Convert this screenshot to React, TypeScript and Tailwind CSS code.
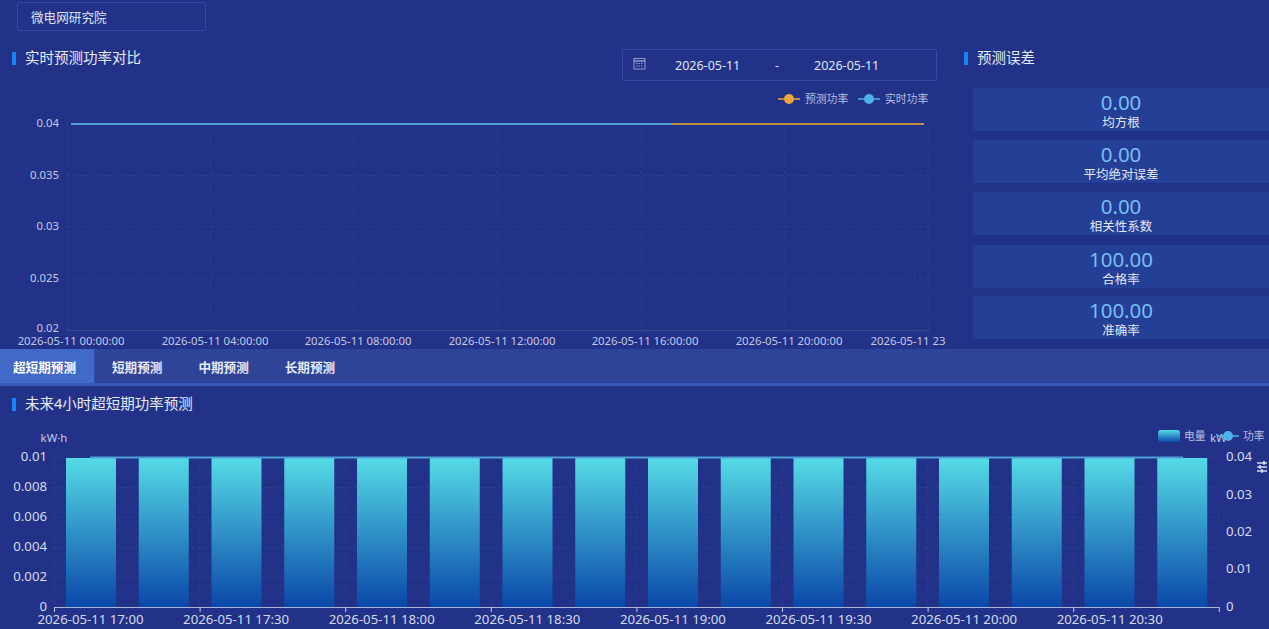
const FONT = '"Noto Sans", "Noto Sans CJK SC", sans-serif';

const stats = [
  { value: '0.00', label: '均方根' },
  { value: '0.00', label: '平均绝对误差' },
  { value: '0.00', label: '相关性系数' },
  { value: '100.00', label: '合格率' },
  { value: '100.00', label: '准确率' },
];

const tabs = ['短期预测', '中期预测', '长期预测'];

const SectionTitle = ({ text }: { text: string }) => (
  <div className="flex items-center gap-[9px] h-[20px]">
    <span className="w-[4px] h-[13px] bg-[#1486f5]" />
    <span className="text-[14.5px] leading-[20px] -mt-[2px] text-[#e6ebf8]">{text}</span>
  </div>
);

// 上方折线图，svg 从页面 y=85 开始
const PowerChart = () => {
  const xs = [67.5, 210.5, 354, 497.5, 641.5, 785, 920, 929];
  const ys = [90.5, 142, 193.5];
  const yLabels = [
    { t: '0.04', y: 38 },
    { t: '0.035', y: 90 },
    { t: '0.03', y: 141 },
    { t: '0.025', y: 193 },
    { t: '0.02', y: 243 },
  ];
  const xLabels = [
    { t: '2026-05-11 00:00:00', x: 71 },
    { t: '2026-05-11 04:00:00', x: 215 },
    { t: '2026-05-11 08:00:00', x: 358 },
    { t: '2026-05-11 12:00:00', x: 502 },
    { t: '2026-05-11 16:00:00', x: 645 },
    { t: '2026-05-11 20:00:00', x: 789 },
    { t: '2026-05-11 23', x: 908 },
  ];
  return (
    <svg width="950" height="264" className="block">
      {xs.map((x) => (
        <line key={x} x1={x} x2={x} y1="38" y2="245" stroke="#2e3e91" strokeDasharray="3 3" />
      ))}
      {ys.map((y) => (
        <line key={y} x1="67" x2="929" y1={y} y2={y} stroke="#2e3e91" strokeDasharray="3 3" />
      ))}
      <line x1="67" x2="929" y1="245.5" y2="245.5" stroke="#3a4886" />
      {yLabels.map((l) => (
        <text key={l.t} x="59" y={l.y} dy="4" textAnchor="end" fontSize="11.3" fill="#c3cae6">{l.t}</text>
      ))}
      {xLabels.map((l) => (
        <text key={l.t} x={l.x} y="260" textAnchor="middle" fontSize="11.3" fill="#c3cae6">{l.t}</text>
      ))}
      <line x1="71" x2="924" y1="39" y2="39" stroke="#c08f3f" strokeWidth="2" />
      <line x1="71" x2="672" y1="39" y2="39" stroke="#4fa3d3" strokeWidth="2" />
      <line x1="778" x2="800" y1="14" y2="14" stroke="#eca63a" strokeWidth="1.5" />
      <circle cx="789" cy="14" r="5" fill="#eca63a" />
      <text x="805" y="18" fontSize="10.8" fill="#b7bfe0">预测功率</text>
      <line x1="858" x2="880" y1="14" y2="14" stroke="#4fb1e8" strokeWidth="1.5" />
      <circle cx="869" cy="14" r="5" fill="#4fb1e8" />
      <text x="885" y="18" fontSize="10.8" fill="#b7bfe0">实时功率</text>
    </svg>
  );
};

// 下方柱状图，svg 从页面 y=425 开始
const EnergyChart = () => {
  const bars = Array.from({ length: 16 }, (_, i) => 66 + i * 72.75);
  const ticks = Array.from({ length: 9 }, (_, i) => 54 + i * 145.6);
  const labels = ['17:00', '17:30', '18:00', '18:30', '19:00', '19:30', '20:00', '20:30'];
  const leftAxis = [
    { t: '0.01', y: 31 },
    { t: '0.008', y: 61 },
    { t: '0.006', y: 91 },
    { t: '0.004', y: 121 },
    { t: '0.002', y: 151 },
    { t: '0', y: 181 },
  ];
  const rightAxis = [
    { t: '0.04', y: 31 },
    { t: '0.03', y: 69 },
    { t: '0.02', y: 106 },
    { t: '0.01', y: 143 },
    { t: '0', y: 181 },
  ];
  return (
    <svg width="1269" height="204" className="block">
      <defs>
        <linearGradient id="barFill" x1="0" y1="0" x2="0" y2="1">
          <stop offset="0" stopColor="#55dbe6" />
          <stop offset="1" stopColor="#0a47a8" />
        </linearGradient>
      </defs>
      {[32.5, 62.5, 92.5, 122.5, 152.5].map((y) => (
        <line key={y} x1="54" x2="1219" y1={y} y2={y} stroke="#2e3e91" strokeDasharray="3 3" />
      ))}
      {ticks.map((x) => (
        <line key={x} x1={x} x2={x} y1="32" y2="182" stroke="#2e3e91" strokeDasharray="3 3" />
      ))}
      {bars.map((x) => (
        <rect key={x} x={x} y="33" width="50" height="149.5" fill="url(#barFill)" />
      ))}
      <line x1="90" x2="1183" y1="32.5" y2="32.5" stroke="#4f9fd8" strokeWidth="2" />
      <line x1="54" x2="1219" y1="182.5" y2="182.5" stroke="#aab4dc" />
      {ticks.map((x) => (
        <line key={x} x1={x + 0.5} x2={x + 0.5} y1="182" y2="187" stroke="#c3cae6" />
      ))}
      <text x="54" y="17" textAnchor="middle" fontSize="11.4" fill="#c3cae6">kW·h</text>
      {leftAxis.map((l) => (
        <text key={l.t} x="47" y={l.y} dy="5" textAnchor="end" fontSize="13.2" fill="#d5daee">{l.t}</text>
      ))}
      {rightAxis.map((l) => (
        <text key={l.t} x="1226" y={l.y} dy="5" fontSize="13.2" fill="#d5daee">{l.t}</text>
      ))}
      {labels.map((t, i) => (
        <text key={t} x={90.5 + i * 145.6} y="199" textAnchor="middle" fontSize="13.2" fill="#d5daee">{`2026-05-11 ${t}`}</text>
      ))}
      <rect x="1158" y="5" width="22" height="12" rx="3" fill="url(#barFill)" />
      <text x="1184" y="15" fontSize="10.8" fill="#b7bfe0">电量</text>
      <text x="1210" y="17" fontSize="11.4" fill="#c3cae6">kW</text>
      <line x1="1217" x2="1239" y1="11" y2="11" stroke="#4fb1e8" strokeWidth="1.5" />
      <circle cx="1228" cy="11" r="5" fill="#4fb1e8" />
      <text x="1243" y="15" fontSize="10.8" fill="#b7bfe0">功率</text>
      <g stroke="#ffffff" strokeWidth="1.2">
        <line x1="1257" x2="1267" y1="38" y2="38" />
        <line x1="1257" x2="1267" y1="42" y2="42" />
        <line x1="1257" x2="1267" y1="46" y2="46" />
        <line x1="1264" x2="1264" y1="36" y2="40" />
        <line x1="1260" x2="1260" y1="40" y2="44" />
        <line x1="1262" x2="1262" y1="44" y2="48" />
      </g>
    </svg>
  );
};

const App = () => {
  return (
    <div
      className="w-[1269px] h-[629px] overflow-hidden bg-[#223288] text-white"
      style={{ fontFamily: FONT }}
    >
      <div className="h-[349px] flex">
        {/* 左侧 */}
        <div className="w-[950px] shrink-0">
          <div className="pt-[2px] pl-[17px]">
            <div className="w-[189px] h-[29px] border border-[#2f4ba6] rounded-[2px] pl-[13px] pt-[1px] text-[12.6px] leading-[28px] text-[#dfe4f5]">
              微电网研究院
            </div>
          </div>
          <div className="flex justify-between h-[54px]">
            <div className="pl-[12px] pt-[17px]">
              <SectionTitle text="实时预测功率对比" />
            </div>
            <div className="mt-[18px] mr-[13px] w-[315px] h-[32px] border border-[#2f4ba6] rounded-[2px] flex items-center whitespace-nowrap text-[12.5px] text-[#dfe4f5]">
              <svg width="13" height="13" viewBox="0 0 13 13" className="ml-[10px] -mt-[3px] shrink-0" fill="none" stroke="#8f9ccc">
                <rect x="1" y="1.5" width="11" height="10.5" />
                <line x1="1" x2="12" y1="4" y2="4" strokeWidth="1.5" />
                <line x1="3" x2="10" y1="6.5" y2="6.5" strokeDasharray="1.5 1" />
                <line x1="3" x2="10" y1="9" y2="9" strokeDasharray="1.5 1" />
              </svg>
              <span className="ml-[29px] w-[65px] pt-[3px]">2026-05-11</span>
              <span className="w-[74px] text-center pt-[3px]">-</span>
              <span className="w-[65px] pt-[3px]">2026-05-11</span>
            </div>
          </div>
          <PowerChart />
        </div>
        {/* 右侧 */}
        <div className="flex-1 min-w-0">
          <div className="pt-[48px] pl-[14px]">
            <SectionTitle text="预测误差" />
          </div>
          <div className="mt-[20px] ml-[23px] flex flex-col">
            {stats.map((s, i) => (
              <div
                key={s.label}
                className={`h-[43px] bg-[#243f96] flex flex-col items-center pt-[1px] ${i === 3 ? 'mt-[10px]' : i === 4 ? 'mt-[8px]' : i > 0 ? 'mt-[9px]' : ''}`}
              >
                <span className="text-[20.5px] leading-[26px] text-[#79bdf6]">{s.value}</span>
                <span className="text-[12.5px] leading-[15px] text-[#e2e7f6]">{s.label}</span>
              </div>
            ))}
          </div>
        </div>
      </div>

      <div className="h-[37px] flex bg-[#2f4499] border-b-[3px] border-[#3558b8] text-[12.6px] font-bold text-[#e6ebf8]">
        <div className="w-[95px] bg-[#4169c8] border-r border-[#2f4ba6] pl-[13px] leading-[38px] text-white">超短期预测</div>
        <div className="flex pl-[17px] gap-[36px] leading-[38px]">
          {tabs.map((t) => (
            <span key={t}>{t}</span>
          ))}
        </div>
      </div>

      <div className="pl-[12px] pt-[8px] pb-[11px]">
        <SectionTitle text="未来4小时超短期功率预测" />
      </div>
      <EnergyChart />
    </div>
  );
};

export default App;
